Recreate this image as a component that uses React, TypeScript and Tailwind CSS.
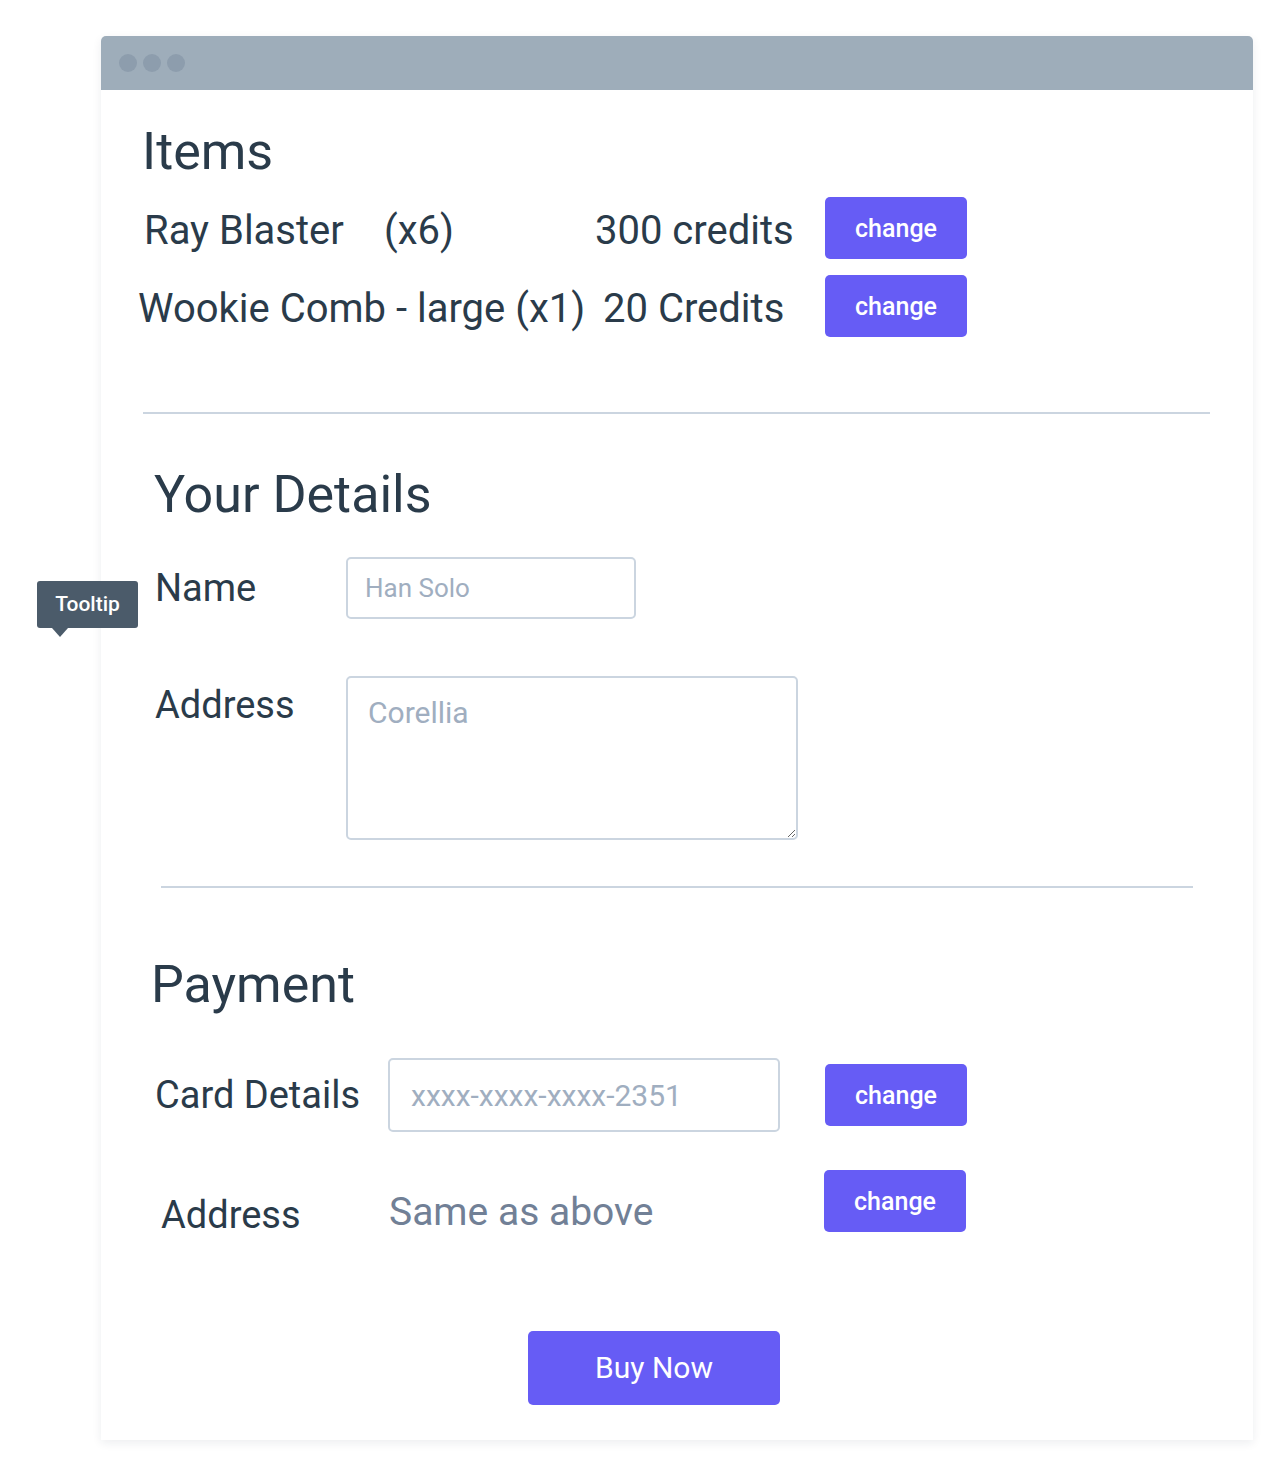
import React from "react";

const btn =
	"shrink-0 w-[142px] h-[62px] rounded-[5px] bg-[#665cf5] text-white text-[25px] font-medium leading-none flex items-center justify-center";

export default function App() {
	return (
		<div className="relative min-h-[1476px] w-[1288px] bg-white font-['Roboto',sans-serif] text-[#2a3b4a]">
			<div className="pt-[36px] pl-[101px]">
				{/* Window */}
				<div className="w-[1152px] h-[1404px] bg-white rounded-t-[5px] shadow-[0_3px_10px_rgba(30,41,59,0.08)] flex flex-col">
					<div className="h-[54px] shrink-0 bg-[#9eadba] rounded-t-[5px] flex items-center gap-[6px] pl-[18px]">
						<span className="w-[18px] h-[18px] rounded-full bg-[#8d9dad]" />
						<span className="w-[18px] h-[18px] rounded-full bg-[#8d9dad]" />
						<span className="w-[18px] h-[18px] rounded-full bg-[#8d9dad]" />
					</div>

					{/* Items */}
					<h1 className="mt-[36px] ml-[41px] text-[52px] leading-none font-normal">
						Items
					</h1>

					<div className="mt-[19px] flex flex-col gap-[16px] text-[40px] leading-none">
						<div className="ml-[43px] flex items-center h-[62px]">
							<span className="w-[240px] shrink-0 pt-[6px]">Ray Blaster</span>
							<span className="w-[211px] shrink-0 pt-[6px]">(x6)</span>
							<span className="w-[230px] shrink-0 pt-[6px]">300 credits</span>
							<button type="button" className={btn}>
								change
							</button>
						</div>
						<div className="ml-[37px] flex items-center h-[62px]">
							<span className="w-[465px] shrink-0 pt-[6px] whitespace-nowrap">
								Wookie Comb - large (x1)
							</span>
							<span className="w-[222px] shrink-0 pt-[6px]">20 Credits</span>
							<button type="button" className={btn}>
								change
							</button>
						</div>
					</div>

					<div className="mt-[75px] ml-[42px] w-[1067px] h-[2px] bg-[#cbd5e0]" />

					{/* Your Details */}
					<h2 className="mt-[55px] ml-[53px] text-[52px] leading-none font-normal">
						Your Details
					</h2>

					<div className="mt-[36px] ml-[54px] flex items-center text-[38px] leading-none">
						<span className="w-[191px] shrink-0">Name</span>
						<input
							readOnly
							placeholder="Han Solo"
							className="w-[290px] h-[62px] border-2 border-[#cbd5e0] rounded-[5px] pl-[17px] text-[26px] outline-none placeholder:text-[#a0aec0]"
						/>
					</div>

					<div className="mt-[57px] ml-[54px] flex items-start text-[38px] leading-none">
						<span className="w-[191px] shrink-0 pt-[10px]">Address</span>
						<textarea
							readOnly
							placeholder="Corellia"
							className="w-[452px] h-[164px] border-2 border-[#cbd5e0] rounded-[5px] pl-[20px] pt-[17px] text-[30px] leading-[1.2] outline-none placeholder:text-[#a0aec0]"
						/>
					</div>

					<div className="mt-[46px] ml-[60px] w-[1032px] h-[2px] bg-[#cbd5e0]" />

					{/* Payment */}
					<h2 className="mt-[71px] ml-[50px] text-[52px] leading-none font-normal">
						Payment
					</h2>

					<div className="mt-[47px] ml-[54px] flex items-center text-[38px] leading-none">
						<span className="w-[233px] shrink-0">Card Details</span>
						<input
							readOnly
							placeholder="xxxx-xxxx-xxxx-2351"
							className="w-[392px] h-[74px] border-2 border-[#cbd5e0] rounded-[5px] pl-[21px] text-[30px] outline-none placeholder:text-[#a0aec0]"
						/>
						<button type="button" className={`${btn} ml-[45px]`}>
							change
						</button>
					</div>

					<div className="mt-[38px] ml-[60px] flex items-start h-[62px] leading-none">
						<span className="w-[228px] shrink-0 pt-[26px] text-[38px]">Address</span>
						<span className="w-[435px] shrink-0 pt-[23px] text-[39px] text-[#718096]">
							Same as above
						</span>
						<button type="button" className={btn}>
							change
						</button>
					</div>

					<button
						type="button"
						className="mt-[99px] ml-[427px] w-[252px] h-[74px] rounded-[5px] bg-[#665cf5] text-white text-[30px] leading-none flex items-center justify-center"
					>
						Buy Now
					</button>
				</div>
			</div>

			{/* Tooltip */}
			<div className="absolute left-[37px] top-[581px] w-[101px] h-[47px] rounded-[3px] bg-[#4b5b6a] text-white text-[21px] font-medium leading-none flex items-center justify-center">
				Tooltip
				<span className="absolute left-[15px] top-[47px] w-0 h-0 border-l-[8px] border-r-[8px] border-t-[9px] border-l-transparent border-r-transparent border-t-[#4b5b6a]" />
			</div>
		</div>
	);
}
